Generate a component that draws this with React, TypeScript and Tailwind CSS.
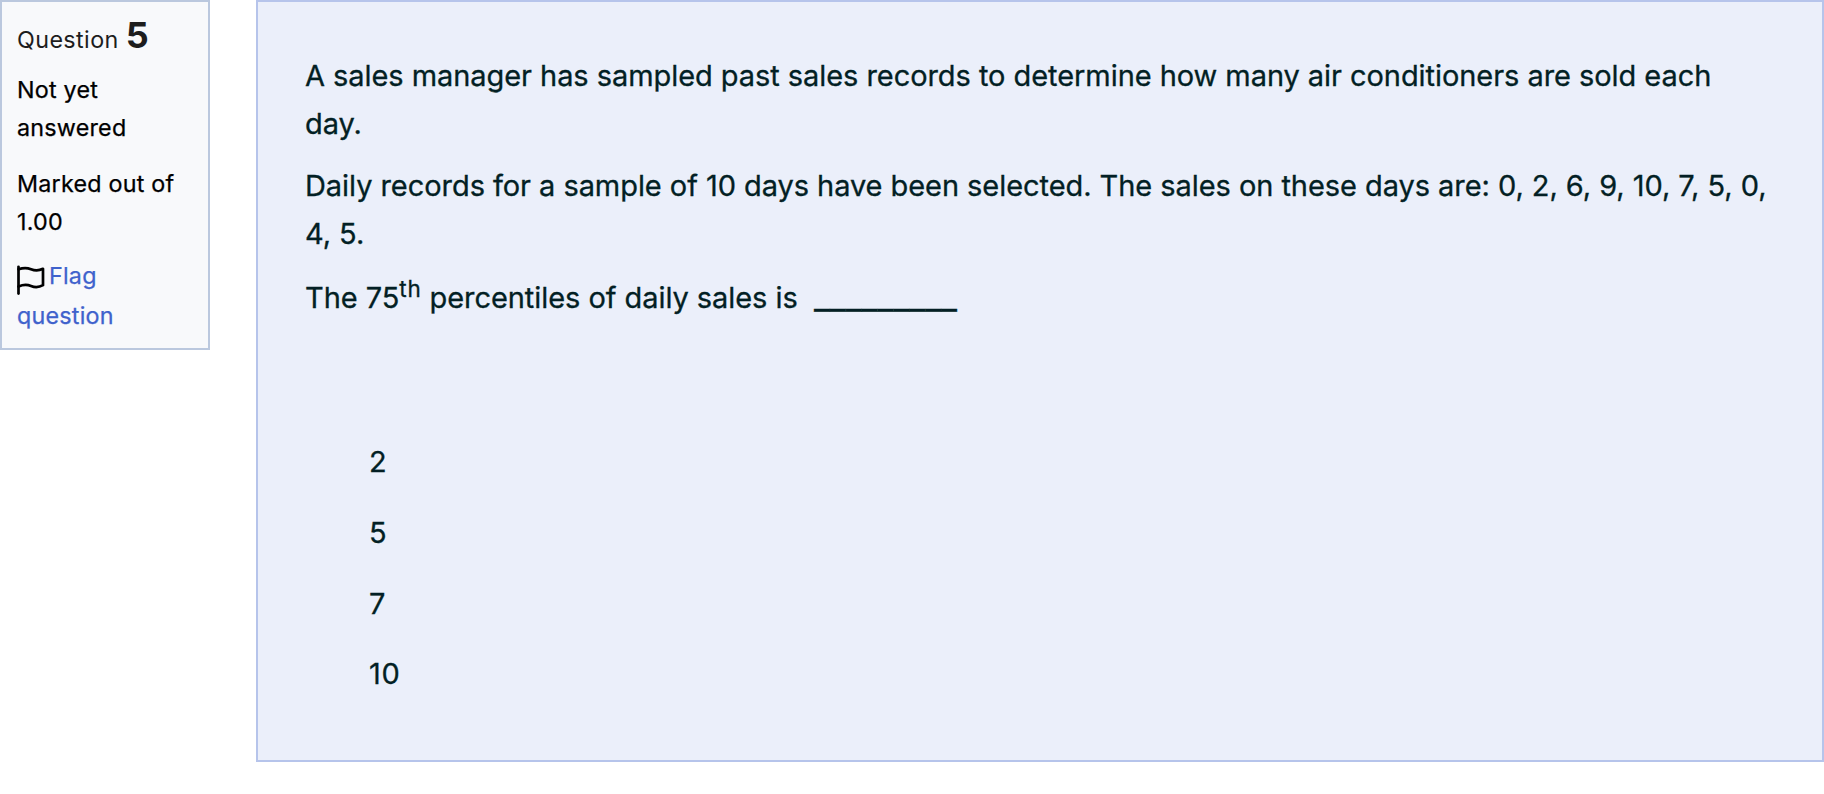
const answers = ["2", "5", "7", "10"];

function FlagIcon() {
  return (
    <svg
      className="mr-1 inline-block h-[30px] w-[28px] align-[-11px]"
      viewBox="0 0 28 30"
      fill="none"
      stroke="#000"
      strokeWidth="2.7"
      strokeLinecap="round"
      strokeLinejoin="round"
    >
      <path d="M1.5 1.8V28.6" />
      <path d="M1.5 4.2C7 2.4 9.6 2.4 14 4.2S21.5 6 26 3.8V20.2C21.5 22.8 18.5 22.8 14 21S7 19.3 1.5 21.4" />
    </svg>
  );
}

function QuestionInfo() {
  return (
    <div className="h-[350px] w-[210px] shrink-0 border-2 border-[#bbc8de] bg-[#f8f9fb] px-[15px] text-[23.3px] leading-[38px] tracking-[0.22px] text-black">
      <h3 className="mt-[10px] h-[56px] leading-[46px] tracking-[0.4px] text-[#1d1d1d]">
        Question <span className="text-[36px] font-bold">5</span>
      </h3>
      <div className="mt-[3px] h-[76px] [-webkit-text-stroke:0.25px]">Not yet answered</div>
      <div className="mt-[18px] whitespace-nowrap [-webkit-text-stroke:0.25px]">
        Marked out of
        <br />
        1.00
      </div>
      <div className="mt-[15px] leading-[40px]">
        <a href="#" className="text-[#3f62cc] [-webkit-text-stroke:0.25px]">
          <FlagIcon />
          Flag question
        </a>
      </div>
    </div>
  );
}

export default function App() {
  return (
    <div className="flex h-[794px] w-[1824px] items-start gap-[46px] bg-white font-[Inter,sans-serif]">
      <QuestionInfo />
      <div className="h-[762px] w-[1568px] shrink-0 border-2 border-[#b6c4eb] bg-[#ebeffa] pt-[50px] pl-[47px] text-[29px] leading-[48px] tracking-[-0.06px] whitespace-nowrap text-[#031f24] [-webkit-text-stroke:0.3px]">
        <p>
          A sales manager has sampled past sales records to determine how many air conditioners are sold each
          <br />
          day.
        </p>
        <p className="mt-[14px]">
          Daily records for a sample of 10 days have been selected. The sales on these days are: 0, 2, 6, 9, 10, 7, 5, 0,
          <br />
          4, 5.
        </p>
        <p className="mt-4">
          The 75<sup className="text-[22.5px] tracking-[0.7px]">th</sup> percentiles of daily sales is&nbsp;{" "}
          <span className="align-[-1px] text-[35px] leading-none">_________</span>
        </p>
        <div className="mt-[116px] flex flex-col gap-[22.8px] pl-16 tracking-[0.7px]">
          {answers.map((answer) => (
            <div key={answer}>{answer}</div>
          ))}
        </div>
      </div>
    </div>
  );
}
